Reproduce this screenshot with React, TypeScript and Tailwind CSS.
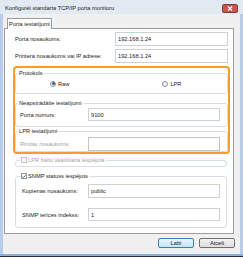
import React from 'react';

function TextBox({ value, h = 'h-[14px]', disabled = false }: { value?: string; h?: string; disabled?: boolean }) {
    return (
        <div
            className={`flex-1 ${h} flex items-center pl-[2px] border bg-white ${disabled ? 'border-[#c4c4c4]' : 'border-[#cdd0d6]'
                }`}
        >
            {value}
        </div>
    );
}

function Radio({ label, checked }: { label: string; checked?: boolean }) {
    return (
        <span className="flex items-center gap-[2px]">
            <span className="w-[6px] h-[6px] rounded-full border border-[#8f9296] bg-[#f3f3f3] flex items-center justify-center">
                {checked && <span className="w-[3px] h-[3px] rounded-full bg-[#2c5f9a]" />}
            </span>
            {label}
        </span>
    );
}

function CheckBox({ label, checked, disabled }: { label: string; checked?: boolean; disabled?: boolean }) {
    return (
        <span className={`flex items-center gap-[1px] ${disabled ? 'text-[#a3a3a3]' : ''}`}>
            <span
                className={`w-[6px] h-[6px] border flex items-center justify-center ${disabled ? 'border-[#c8c8c8] bg-[#f4f4f4]' : 'border-[#8f9296] bg-white'
                    }`}
            >
                {checked && (
                    <svg width="5" height="5" viewBox="0 0 5 5">
                        <path d="M0.6 2.6 L1.9 3.9 L4.4 0.9" fill="none" stroke="#233b68" strokeWidth="1" />
                    </svg>
                )}
            </span>
            {label}
        </span>
    );
}

export default function App() {
    return (
        <div className="w-[243px] h-[257px] flex flex-col bg-[#e1e9f3] text-[5.7px] leading-[6px] text-[#1b1b1b] font-['Liberation_Sans',Arial,sans-serif] overflow-hidden">
            {/* title bar */}
            <div className="h-[14px] flex items-start justify-between pl-[5px] pr-[5px]">
                <span className="mt-[5px]">Konfigurēt standarta TCP/IP porta monitoru</span>
                <span className="mt-[4px] w-[16px] h-[9px] rounded-[2px] border border-[#8d3a35] bg-[#c8564d] flex items-center justify-center">
                    <svg width="6" height="5" viewBox="0 0 6 5">
                        <path d="M1 0.5 L5 4.5 M5 0.5 L1 4.5" stroke="#ffffff" strokeWidth="1.3" />
                    </svg>
                </span>
            </div>

            <div className="flex-1 flex flex-col bg-[#f0f0f0] border-l-[3px] border-r-[3px] border-l-[#b7cde8] border-r-[#b7cde8] pt-[4px]">
                <div className="ml-[4px] w-[45px] h-[11px] -mb-[1px] relative z-10 bg-white border border-b-0 border-[#9a9ca3] flex items-center justify-center">
                    Porta iestatījumi
                </div>

                <div className="ml-[1px] mr-[6px] h-[206px] border border-[#9a9ca3] bg-white flex flex-col">
                    <div className="mt-[3px] flex items-center pl-[10px] pr-[5px]">
                        <span className="w-[100px]">Porta nosaukums:</span>
                        <TextBox value="192.168.1.24" />
                    </div>
                    <div className="mt-[3px] flex items-center pl-[10px] pr-[5px]">
                        <span className="w-[100px]">Printera nosaukums vai IP adrese:</span>
                        <TextBox value="192.168.1.24" />
                    </div>

                    <div className="mt-[3px] ml-[8px] mr-[3px] border-2 border-[#f29d2e] rounded-[4px] flex flex-col">
                        <fieldset className="mt-[2px] border border-[#d5dfe5] rounded-[3px] pt-[4px] pb-[6px]">
                            <legend className="ml-[2px] px-[1px]">Protokols</legend>
                            <div className="h-[7px] flex items-center pl-[34px] gap-[93px]">
                                <Radio label="Raw" checked />
                                <Radio label="LPR" />
                            </div>
                        </fieldset>

                        <fieldset className="mt-[6px] border border-[#d5dfe5] rounded-[3px] pt-[2px] pb-[5px] pl-[4px] pr-[7px]">
                            <legend className="ml-[-2px] px-[1px]">Neapstrādātie iestatījumi</legend>
                            <div className="flex items-center">
                                <span className="w-[68px]">Porta numurs:</span>
                                <TextBox value="9100" h="h-[13px]" />
                            </div>
                        </fieldset>

                        <fieldset className="mt-[1px] border border-[#d5dfe5] rounded-[3px] pt-[3px] pl-[4px] pr-[7px]">
                            <legend className="ml-[-2px] px-[1px]">LPR iestatījumi</legend>
                            <div className="flex items-center">
                                <span className="w-[68px] text-[#a3a3a3]">Rindas nosaukums:</span>
                                <TextBox disabled />
                            </div>
                        </fieldset>
                    </div>

                    <fieldset className="mt-[3px] ml-[10px] mr-[6px] border border-[#d5dfe5] rounded-[3px] pb-[3px]">
                        <legend className="ml-[4px] px-[1px]">
                            <CheckBox label="LPR baitu skaitīšana iespējota" disabled />
                        </legend>
                    </fieldset>

                    <fieldset className="mt-[6px] ml-[10px] mr-[6px] border border-[#d5dfe5] rounded-[3px] pt-[5px] pb-[6px] pl-[6px] pr-[6px]">
                        <legend className="ml-[-2px] px-[1px]">
                            <CheckBox label="SNMP statuss iespējots" checked />
                        </legend>
                        <div className="flex items-center">
                            <span className="w-[66px]">Kopienas nosaukums:</span>
                            <TextBox value="public" />
                        </div>
                        <div className="mt-[10px] flex items-center">
                            <span className="w-[66px]">SNMP ierīces indekss:</span>
                            <TextBox value="1" h="h-[13px]" />
                        </div>
                    </fieldset>
                </div>

                <div className="mt-[4px] flex justify-end gap-[5px] pr-[5px]">
                    <button className="w-[36px] h-[10px] rounded-[2px] border border-[#3c7fb1] bg-gradient-to-b from-[#eaf6fd] to-[#bee6fd] flex items-center justify-center">
                        Labi
                    </button>
                    <button className="w-[36px] h-[10px] rounded-[2px] border border-[#707070] bg-gradient-to-b from-[#f2f2f2] to-[#dddddd] flex items-center justify-center">
                        Atcelt
                    </button>
                </div>
            </div>

            <div className="h-[2px] bg-[#8fb2dc]" />
            <div className="h-[1px] bg-[#22303f]" />
        </div>
    );
}
